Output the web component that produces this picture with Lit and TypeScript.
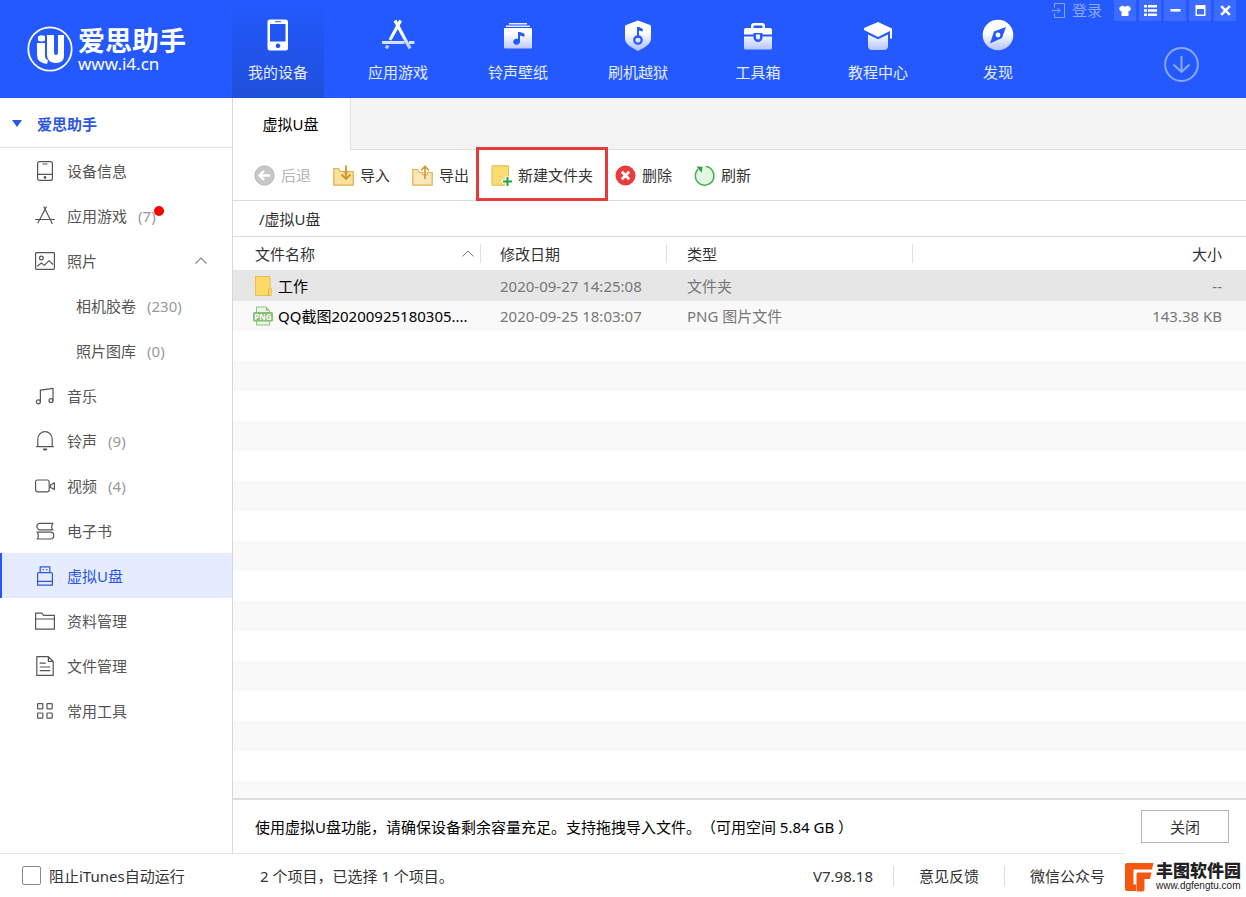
import { LitElement, html, svg, css, nothing, type TemplateResult, type SVGTemplateResult } from "lit";
import { customElement, state } from "lit/decorators.js";
import { classMap } from "lit/directives/class-map.js";

const line = (body: SVGTemplateResult): TemplateResult => html`
  <svg class="icon" viewBox="0 0 20 20" width="20" height="20" aria-hidden="true" fill="none" stroke="currentColor" stroke-width="1.2" stroke-linejoin="round" stroke-linecap="round">${body}</svg>`;

const sideIcons: Record<string, TemplateResult> = {
  device: line(svg`<rect x="2.6" y="0.6" width="14.8" height="18.8" rx="2"/><path d="M2.6 13.4h14.8M8 3h4"/><circle cx="10" cy="16.4" r=".8"/>`),
  apps: line(svg`<path d="M9 1l8.200 16.500M11.300 1L3 16.800M.6 13.500h18.800"/>`),
  photo: line(svg`<rect x=".6" y="1.600" width="18.800" height="16.800" rx=".8"/><circle cx="6.400" cy="7" r="1.900"/><path d="M2.400 15l4-3 3 2.400 4.600-4.800 3.800 3.600"/>`),
  music: line(svg`<path d="M5.400 15.600V4.200L18 2.400v12.200"/><circle cx="3.400" cy="15.800" r="2"/><circle cx="16" cy="14.600" r="2"/>`),
  bell: line(svg`<path d="M2.800 15.400V8.200a7.200 7.600 0 0 1 14.400 0v7.200M1.600 15.600h16.800"/><path fill="currentColor" d="M8.400 18.200q1.600 1.400 3.200 0z"/>`),
  video: line(svg`<rect x=".6" y="4" width="13.600" height="11.800" rx="2"/><path d="M15.600 9l3.800-2.200v6.800l-3.800-2.200z"/>`),
  book: line(svg`<path d="M18 2.400H4.600a3 3 0 0 0-2 5l1.400 1.400H18M17.400 2.400q-1.400 3.200 0 6.400M2 11.200h13.400a3 3 0 0 1 0 6.800H2M2.600 11.200q1.400 3.400 0 6.800"/>`),
  usb: line(svg`<path d="M5.200 6.600V.8h9.600v5.800M2.600 7.800q0-1.200 1.200-1.200h12.400q1.200 0 1.200 1.200v11.400H2.600zM2.600 15.400h14.800M8 3.600h.4M11.600 3.600h.4"/>`),
  folder: line(svg`<path d="M.6 18V2.200h6.200l1.800 2.200h10.800V18.200H.6zM.6 8h18.800"/>`),
  file: line(svg`<path d="M1.800.6h11.600l4.800 4.800v14H1.800zM13.400.8v4.600h4.600M5.200 7.200h5M5.200 11h9.600M5.200 14.600h9.600"/>`),
  grid: line(svg`<rect x="2.600" y="2.600" width="5.200" height="5.200" rx=".6"/><rect x="12" y="2.600" width="5.200" height="5.200" rx=".6"/><rect x="2.600" y="12" width="5.200" height="5.200" rx=".6"/><rect x="12" y="12" width="5.200" height="5.200" rx=".6"/>`),
};

const solid = (id: string, body: SVGTemplateResult): TemplateResult => html`
  <svg class="nav-icon" viewBox="0 0 34 34" width="34" height="34" aria-hidden="true">
    <defs><linearGradient id=${id} gradientUnits="userSpaceOnUse" x1="0" y1="4" x2="0" y2="32"><stop offset=".4" stop-color="#fff"/><stop offset="1" stop-color="#b4c4fb"/></linearGradient></defs>
    ${body}
  </svg>`;

const BLUE = "#2359ff";

const navIcons: Record<string, TemplateResult> = {
  device: solid("gd", svg`<path fill="#fff" fill-rule="evenodd" d="M9 1.500h15.500a2.500 2.500 0 0 1 2.500 2.500v26a2.500 2.500 0 0 1-2.500 2.500H9A2.500 2.500 0 0 1 6.500 30V4A2.500 2.500 0 0 1 9 1.500zM9 6v17.500h15.500V6zM14 3.200v1.100h6V3.200zM17 25.600a2.300 2.300 0 1 0 .01 0z"/>`),
  apps: solid("ga", svg`<g fill="none" stroke="url(#ga)" stroke-width="3.200"><path d="M14 2.500l15 28"/><path d="M19.600 2.500L9 22"/><path d="M1 24.500h22.500M28 24.500h5.500"/><path d="M7 27.500l-1.800 3"/></g>`),
  ring: solid("gr", svg`<path fill="#e4eaff" d="M8 5h18v1.500H8zM5 7.500h24V9H5z"/><rect x="3" y="10" width="28" height="20.500" rx="1" fill="url(#gr)"/><path fill=${BLUE} d="M17 14h2l4.500 1.800v3L19 17.400v6.200a3.400 3 0 1 1-2-2.600z"/>`),
  flash: solid("gf", svg`<path fill="url(#gf)" d="M17 3.500L29 8q1 .4 1 1.500V22c0 5-7 9-13 12C11 31 4 27 4 22V9.500Q4 8.400 5 8z" transform="translate(0 -1)"/><circle cx="17" cy="22" r="3.700" fill="none" stroke=${BLUE} stroke-width="2.200"/><path fill=${BLUE} d="M16 9h2l3.800 2v2.600L18 12.400V20h-2z"/>`),
  tools: solid("gt", svg`<path fill="url(#gt)" fill-rule="evenodd" d="M10 10V8q0-3 3-3h8q3 0 3 3v2h5q2 0 2 2v4.500h-9.500V15h-9v1.500H3V12q0-2 2-2zM12.500 10h9V8.500q0-1-1-1h-7q-1 0-1 1z"/><path fill="url(#gt)" fill-rule="evenodd" d="M3 18.500h9.500V20q1 4 4.500 4t4.500-4v-1.500H31V30q0 1.500-1.500 1.500h-25Q3 31.500 3 30zM15 16.500h4V20q0 1.500-2 1.500T15 20z"/>`),
  school: solid("gs", svg`<path fill="#fff" d="M17 4l14 6.500v10h-2V13l-12 6L3 12v-2z"/><path fill="url(#gs)" d="M7 16.500l10 4.800 10-4.800V28q0 4-4 4H11q-4 0-4-4z"/>`),
  explore: solid("ge", svg`<circle cx="17" cy="17" r="15.300" fill="url(#ge)"/><path fill=${BLUE} d="M25 9l-4 11-12 5.500 4-12z"/><circle cx="17" cy="17" r="2.400" fill="#fff"/>`),
};

const tool = (body: SVGTemplateResult): TemplateResult => html`
  <svg class="icon" viewBox="0 0 21 21" width="21" height="21" aria-hidden="true">${body}</svg>`;

const toolIcons: Record<string, TemplateResult> = {
  back: tool(svg`<circle cx="10.500" cy="10.500" r="9.600" fill="#c8c8c8" stroke="#b5b5b5"/><path d="M16 10.500H6M10 6l-4.500 4.500L10 15" fill="none" stroke="#fff" stroke-width="2.400"/>`),
  import: tool(svg`<path d="M.8 3.500h4.500l2 3h4V8h3V6.500h5.900v13.700H.8z" fill="#fbe19a" stroke="#e2b04c" stroke-width="1.200"/><path d="M13 .5v13M8.500 9.500L13 14l4.500-4.500" fill="none" stroke="#d0962c" stroke-width="1.800"/>`),
  export: tool(svg`<path d="M.8 4.500h4.500l2 3h3.500V10h4.400V7.500h5v12.700H.8z" fill="#fbe8b8" stroke="#e2b04c" stroke-width="1.200"/><path d="M13 14V2M9 5.500l4-4 4 4" fill="none" stroke="#d0962c" stroke-width="1.600"/>`),
  create: tool(svg`<path d="M1 .8h16.500V14l-2 6.200H1z" fill="#fbdc73" stroke="#e3b94a"/><path d="M11 16.500h10M16 11.500v10" stroke="#fff" stroke-width="4"/><path d="M12 16.500h9M16.500 12v9" stroke="#1eaa3c" stroke-width="2"/>`),
  remove: tool(svg`<circle cx="10.500" cy="10.500" r="10" fill="#ea3c3c"/><path d="M6.800 6.800l7.400 7.400M14.200 6.800l-7.400 7.400" stroke="#fff" stroke-width="2.800"/>`),
  refresh: tool(svg`<circle cx="10.500" cy="10.800" r="9.400" fill="#e3f8e2"/><path d="M12 1.600a9.300 9.300 0 1 1-7.800 2.500" fill="none" stroke="#4caf50" stroke-width="1.500"/><path d="M2.500 1.500l6 .2-.8 6z" fill="#2f9e44"/>`),
};

interface SideItem { icon?: string; label: string; count?: number; dot?: boolean; open?: boolean; }

const sideItems: SideItem[] = [
  { icon: "device", label: "设备信息" },
  { icon: "apps", label: "应用游戏", count: 7, dot: true },
  { icon: "photo", label: "照片", open: true },
  { label: "相机胶卷", count: 230 },
  { label: "照片图库", count: 0 },
  { icon: "music", label: "音乐" },
  { icon: "bell", label: "铃声", count: 9 },
  { icon: "video", label: "视频", count: 4 },
  { icon: "book", label: "电子书" },
  { icon: "usb", label: "虚拟U盘" },
  { icon: "folder", label: "资料管理" },
  { icon: "file", label: "文件管理" },
  { icon: "grid", label: "常用工具" },
];

const navItems = [
  ["device", "我的设备"], ["apps", "应用游戏"], ["ring", "铃声壁纸"], ["flash", "刷机越狱"],
  ["tools", "工具箱"], ["school", "教程中心"], ["explore", "发现"],
];

const toolItems = [
  ["back", "后退"], ["import", "导入"], ["export", "导出"], ["create", "新建文件夹"], ["remove", "删除"], ["refresh", "刷新"],
];

const files = [
  { kind: "folder", name: "工作", date: "2020-09-27 14:25:08", type: "文件夹", size: "--" },
  { kind: "png", name: "QQ截图20200925180305....", date: "2020-09-25 18:03:07", type: "PNG 图片文件", size: "143.38 KB" },
];

const folderIcon = html`<svg class="icon" viewBox="0 0 20 20" width="20" height="20" aria-hidden="true"><path d="M2.500.5h14.500v11l1.200 1v7H2.500z" fill="#fcd968" stroke="#e9bd4e"/><path d="M15.500 19.500v-6l1.500-2" fill="none" stroke="#e0a93a"/></svg>`;
const pngIcon = html`<svg class="icon" viewBox="0 0 20 20" width="20" height="20" aria-hidden="true"><path d="M3.500 6V1h9.500l3.500 3.500V6M3.500 14v5h13v-5" fill="#e9f5e6" stroke="#8cc27c"/><path d="M13 1v3.500h3.500" fill="#8cc27c"/><rect y="6" width="20" height="9.500" rx="1.500" fill="#8abd7a"/><text x="10" y="13.600" font-size="8" font-weight="700" text-anchor="middle" fill="#fff">PNG</text></svg>`;

@customElement("app-root")
export class AppRoot extends LitElement {
  @state() private section = "虚拟U盘";
  @state() private selected = 0;

  static styles = css`
    :host { display: flex; flex-direction: column; min-height: 100vh; background: #fff; color: #333;
      font: 15px/20px "Noto Sans", "Noto Sans CJK SC", sans-serif; text-spacing-trim: space-all; }
    * { box-sizing: border-box; }
    a { color: inherit; text-decoration: none; }
    button { font: inherit; color: inherit; border: 0; padding: 0; background: none; cursor: pointer; }
    svg { display: block; flex: none; overflow: visible; }

    .top { display: flex; height: 98px; background: #2359ff; color: #fff; }
    .brand { display: flex; align-items: center; gap: 5px; width: 232px; padding-left: 27px; flex: none; }
    .brand-text { display: flex; flex-direction: column; padding-top: 6px; }
    .brand-name { font-size: 27px; line-height: 24px; font-weight: 700; }
    .brand-url { font-size: 17px; line-height: 22px; }
    .nav { display: flex; gap: 28px; }
    .nav-link { display: flex; flex-direction: column; align-items: center; gap: 10px; width: 92px; padding-top: 18px; color: #e6ecff; }
    .nav-link.active { background: linear-gradient(#2359ff, #1f4fd9); }
    .top-side { display: flex; flex-direction: column; align-items: flex-end; gap: 26px; margin-left: auto; }
    .window { display: flex; gap: 3px; padding-right: 10px; }
    .login { display: flex; align-items: center; gap: 7px; height: 20px; margin-right: 9px; color: #8ba8ff; }
    .win-btn { display: grid; place-items: center; width: 22px; height: 21px; background: #3b6bff; }
    .download { margin-right: 47px; color: #8ba8ff; }

    .body { display: flex; flex: 1; }
    .side { width: 233px; flex: none; border-right: 1px solid #d8d8d8; }
    .side-title { display: flex; align-items: center; gap: 15px; height: 50px; padding: 2px 0 0 12px; border-bottom: 1px solid #e4e4e4;
      color: #2b57e0; font-weight: 700; }
    .side-link { display: flex; align-items: center; height: 45px; padding: 0 25px 0 35px; color: #555; }
    .side-link .label { margin-left: 12px; }
    .side-link.child { padding-left: 64px; }
    .side-link.active { background: #e6ecff; color: #2b57e0; box-shadow: inset 2px 0 #2359ff; }
    .count { position: relative; margin-left: 11px; color: #999; }
    .dot { position: absolute; right: -8px; top: 0; width: 10px; height: 10px; border-radius: 50%; background: #f00; }
    .chevron { margin-left: auto; }

    .main { display: flex; flex-direction: column; flex: 1; min-width: 0; }
    .tabs { display: flex; height: 52px; background: #f4f4f4; box-shadow: inset 0 -1px #e0e0e0; }
    .tab { width: 118px; padding-right: 2px; background: #fff; border-right: 1px solid #e0e0e0; color: #000; }
    .tools { display: flex; align-items: center; gap: 22px; height: 51px; padding-left: 21px; border-bottom: 1px solid #dcdcdc; }
    .tool { position: relative; display: flex; align-items: center; gap: 6px; white-space: nowrap; }
    .tool:disabled { color: #b4b4b4; }
    .tool.marked::after { content: ""; position: absolute; inset: -18px -15px -15px -15px; border: 3px solid #e73b3b; }
    .path { height: 36px; padding: 8px 26px; border-bottom: 1px solid #dcdcdc; }
    .files { width: 100%; border-collapse: collapse; table-layout: fixed; }
    .files th { position: relative; height: 33px; padding: 0 0 0 20px; text-align: left; font-weight: 400; }
    .files th:not(:last-child)::after { content: ""; position: absolute; right: 0; top: 7px; height: 19px; border-right: 1px solid #e0e0e0; }
    .files td { height: 30px; padding: 0 0 0 20px; color: #777; background: #f9f9f9; white-space: nowrap; }
    .files tr.selected td { height: 31px; background: #e6e6e6; }
    .files .name { width: 248px; padding-left: 22px; }
    .files td.name { padding-left: 20px; color: #000; }
    .files .date { width: 186px; padding-left: 19px; }
    .files .type { width: 246px; }
    .files .size { padding-right: 24px; text-align: right; }
    .cell { display: flex; align-items: center; gap: 5px; }
    .cell.head { justify-content: space-between; padding-right: 7px; }
    .empty { flex: 1; background: repeating-linear-gradient(#fff 0 30px, #f9f9f9 30px 60px); }
    .notice { display: flex; align-items: center; justify-content: space-between; height: 55px; padding: 0 17px 0 22px; border-top: 2px solid #dcdcdc; color: #000; }
    .close { width: 88px; height: 33px; border: 1px solid #b4b4b4; color: #333; }

    .status { display: flex; height: 44px; }
    .status-main { display: flex; align-items: center; flex: 1; padding-right: 20px; border-top: 1px solid #e4e4e4; }
    .check { display: flex; align-items: center; gap: 8px; width: 260px; padding-left: 22px; }
    .box { appearance: none; width: 19px; height: 19px; margin: 0; border: 1px solid #888; border-radius: 2px; background: #fff; }
    .box:checked { background: #2359ff; }
    .meta { display: flex; align-items: center; margin-left: auto; }
    .meta > * + * { margin-left: 25px; padding-left: 26px; background: linear-gradient(#ddd, #ddd) 0 0 / 1px 100% no-repeat; }
    .meta > .first { margin-left: 20px; }
    .mark { display: flex; align-items: center; gap: 2px; width: 121px; padding-top: 4px; flex: none; }
    .mark-text { display: flex; flex-direction: column; white-space: nowrap; }
    .mark-name { font-family: "Noto Sans CJK SC", sans-serif; font-size: 17px; line-height: 18px; font-weight: 900; color: #222; }
    .mark-url { font: 10px/14px "Liberation Sans", sans-serif; color: #222; }
  `;

  private renderHeader() {
    return html`<header class="top">
      <a class="brand" href="#">
        <svg viewBox="0 0 46 46" width="46" height="46" aria-hidden="true">
          <circle cx="23" cy="23" r="21.700" fill="none" stroke="#fff" stroke-width="1.800"/>
          <path fill="#fff" d="M11 10.500q3.500-2 7-.5v4.500q-3.500 2-7 0zM10 17h8v13q0 3 3 4l-1 4q-10-1-10-9zM20 9h7v17q0 3 2 3t2-3V9h6v21q0 7-8 7h-1q-8-1-8-8z"/>
        </svg>
        <span class="brand-text"><span class="brand-name">爱思助手</span><span class="brand-url">www.i4.cn</span></span>
      </a>
      <nav class="nav">
        ${navItems.map(([icon, label], i) => html`<a href="#" class=${classMap({ "nav-link": true, active: i === 0 })}>${navIcons[icon]}<span>${label}</span></a>`)}
      </nav>
      <div class="top-side">
        <div class="window">
          <button class="login"><svg viewBox="0 0 13 15" width="13" height="15" fill="none" stroke="currentColor" aria-hidden="true"><path d="M2.500 4.500v-4h10v14h-10v-4M0 7.500h8M5.500 5L8 7.500 5.500 10"/></svg>登录</button>
          <button class="win-btn" aria-label="皮肤"><svg viewBox="0 0 12 11" width="12" height="11"><path fill="#fff" d="M3 .5Q6 2.500 9 .5l3 2.500-1 3H9.500v5h-7V6H1L0 3z"/></svg></button>
          <button class="win-btn" aria-label="菜单"><svg viewBox="0 0 13 11" width="13" height="11"><path fill="#fff" d="M0 0h3v2.500H0zM4 0h9v2.500H4zM0 4.200h3v2.500H0zM4 4.200h9v2.500H4zM0 8.400h3v2.500H0zM4 8.400h9v2.500H4z"/></svg></button>
          <button class="win-btn" aria-label="最小化"><svg viewBox="0 0 11 11" width="11" height="11"><path fill="#fff" d="M.5 4h10v2.600H.5z"/></svg></button>
          <button class="win-btn" aria-label="最大化"><svg viewBox="0 0 11 11" width="11" height="11"><path fill="#fff" fill-rule="evenodd" d="M.5 0h10v11H.5zM2 4v5.500h7V4z"/></svg></button>
          <button class="win-btn" aria-label="关闭窗口"><svg viewBox="0 0 11 11" width="11" height="11"><path stroke="#fff" stroke-width="2.600" d="M1.200 1.200l8.600 8.600M9.800 1.200L1.200 9.800"/></svg></button>
        </div>
        <button class="download" aria-label="下载"><svg viewBox="0 0 35 35" width="35" height="35" fill="none" stroke="currentColor" stroke-width="2"><circle cx="17.500" cy="17.500" r="16.400"/><path d="M17.500 9v16M9.500 17.500l8 7.500 8-7.500"/></svg></button>
      </div>
    </header>`;
  }

  private renderSide() {
    return html`<nav class="side">
      <div class="side-title"><svg viewBox="0 0 10 7" width="10" height="7" aria-hidden="true"><path fill="currentColor" d="M0 0h10L5 7z"/></svg>爱思助手</div>
      ${sideItems.map((item) => html`<a href="#" class=${classMap({ "side-link": true, child: !item.icon, active: item.label === this.section })}
        @click=${(e: Event) => { e.preventDefault(); this.section = item.label; }}>
        ${item.icon ? sideIcons[item.icon] : nothing}<span class="label">${item.label}</span>
        ${item.count === undefined ? nothing : html`<span class="count">(${item.count})${item.dot ? html`<i class="dot"></i>` : nothing}</span>`}
        ${item.open ? html`<svg class="chevron" viewBox="0 0 12 7" width="12" height="7" fill="none" stroke="#888" stroke-width="1.200"><path d="M.5 6.500L6 1l5.500 5.500"/></svg>` : nothing}
      </a>`)}
    </nav>`;
  }

  render() {
    return html`
      ${this.renderHeader()}
      <div class="body">
        ${this.renderSide()}
        <main class="main">
          <div class="tabs"><button class="tab">虚拟U盘</button></div>
          <div class="tools">
            ${toolItems.map(([icon, label]) => html`<button class=${classMap({ tool: true, marked: icon === "create" })} ?disabled=${icon === "back"}>${toolIcons[icon]}${label}</button>`)}
          </div>
          <div class="path">/虚拟U盘</div>
          <table class="files">
            <thead><tr>
              <th class="name"><div class="cell head">文件名称<svg viewBox="0 0 12 7" width="12" height="7" fill="none" stroke="#777" aria-hidden="true"><path d="M.5 6.500L6 1l5.500 5.500"/></svg></div></th>
              <th class="date">修改日期</th><th class="type">类型</th><th class="size">大小</th>
            </tr></thead>
            <tbody>
              ${files.map((f, i) => html`<tr class=${classMap({ selected: i === this.selected })} @click=${() => { this.selected = i; }}>
                <td class="name"><div class="cell">${f.kind === "folder" ? folderIcon : pngIcon}${f.name}</div></td>
                <td class="date">${f.date}</td><td class="type">${f.type}</td><td class="size">${f.size}</td>
              </tr>`)}
            </tbody>
          </table>
          <div class="empty"></div>
          <div class="notice"><span>使用虚拟U盘功能，请确保设备剩余容量充足。支持拖拽导入文件。（可用空间 5.84 GB ）</span><button class="close">关闭</button></div>
        </main>
      </div>
      <footer class="status">
        <div class="status-main">
          <label class="check"><input class="box" type="checkbox">阻止iTunes自动运行</label>
          <span>2 个项目，已选择 1 个项目。</span>
          <div class="meta"><span>V7.98.18</span><a class="first" href="#">意见反馈</a><a href="#">微信公众号</a></div>
        </div>
        <div class="mark">
          <svg viewBox="0 0 29 29" width="29" height="29" aria-hidden="true"><path fill="#f4570f" d="M2 0h26.500l-1.500 6.500H8.500v15H11V28H2q-2 0-2-2V2q0-2 2-2z"/><path fill="#f4570f" d="M13 9.500h13.500L25 16h-5.500v10q0 2.500-2.500 2.500h-5.500V12q0-2.500 1.500-2.500z"/></svg>
          <span class="mark-text"><span class="mark-name">丰图软件园</span><span class="mark-url">www.dgfengtu.com</span></span>
        </div>
      </footer>`;
  }
}
